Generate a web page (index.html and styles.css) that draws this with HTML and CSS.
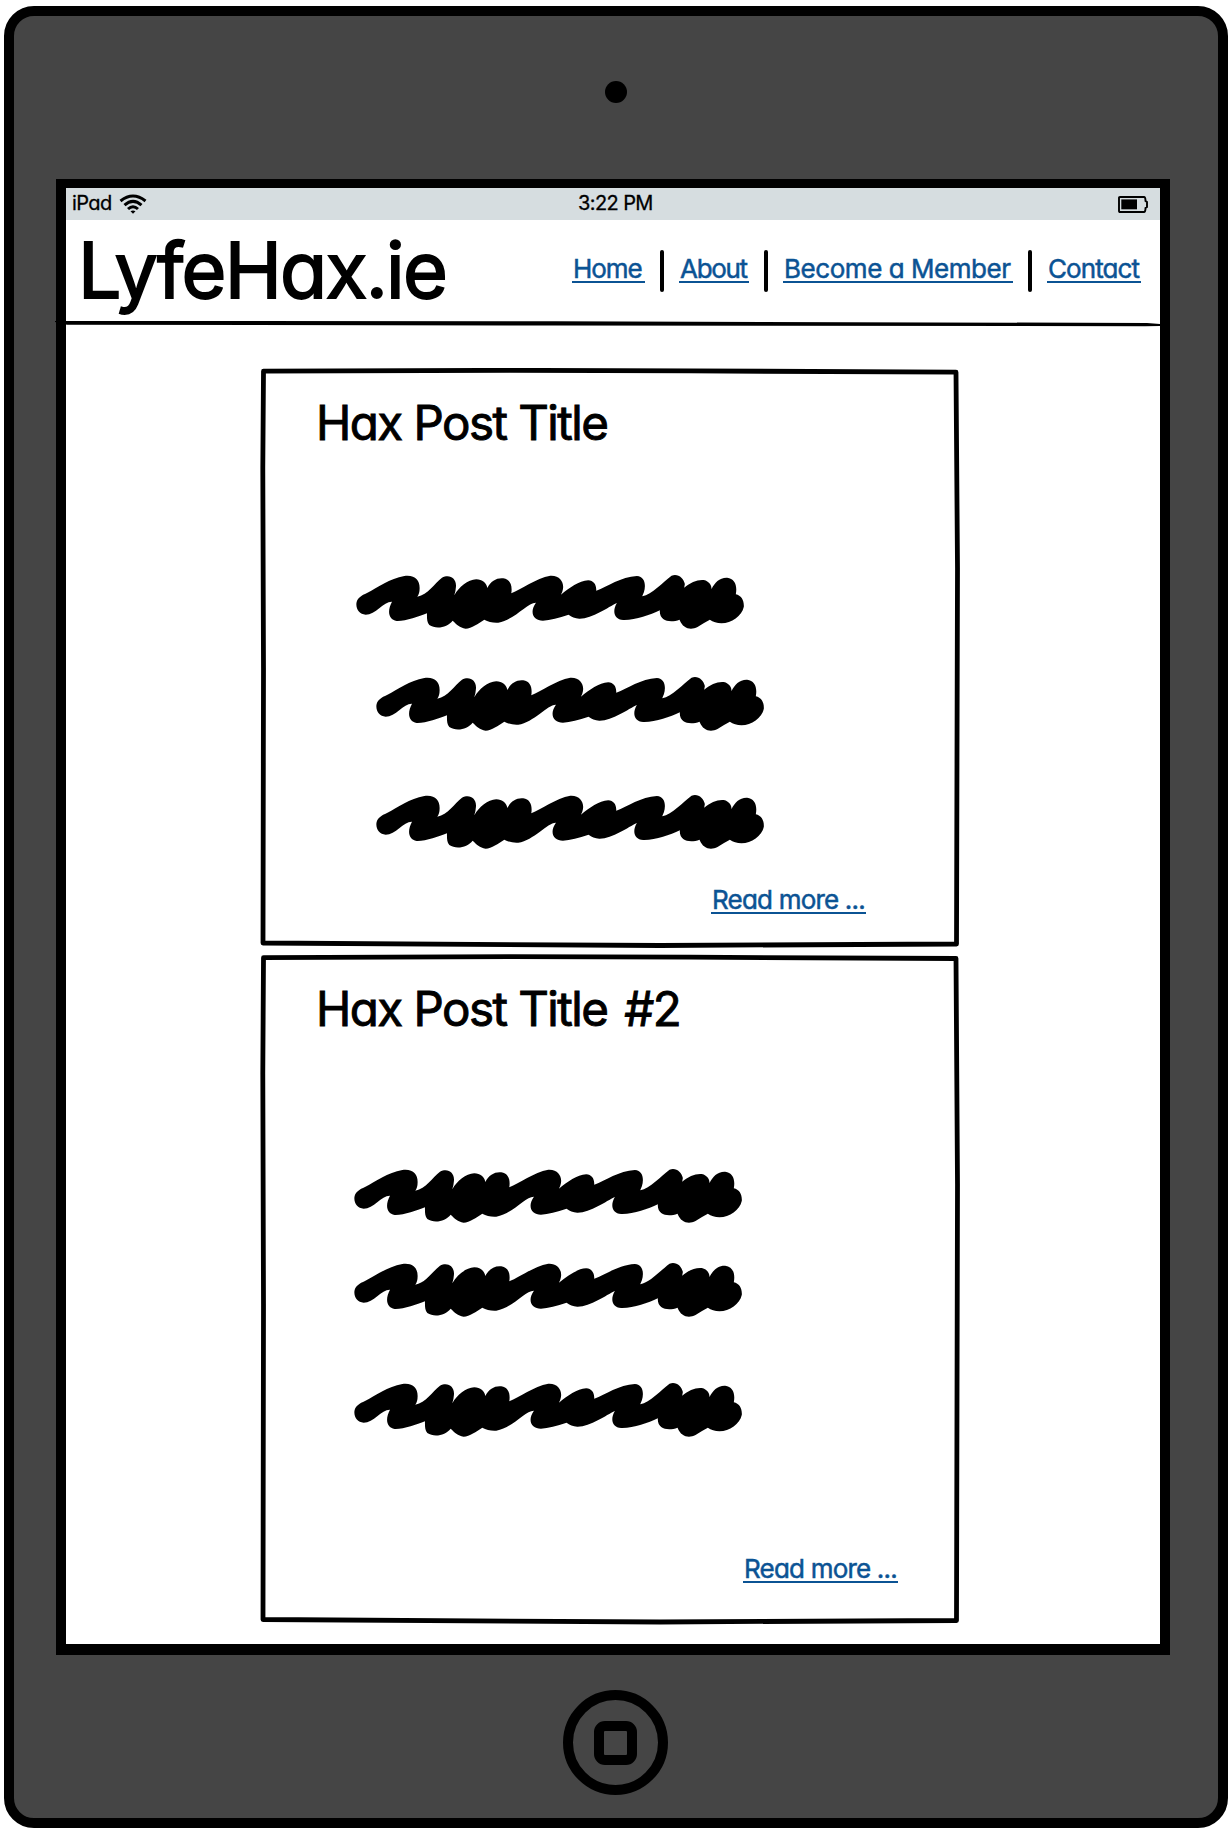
FILE: index.html
```html
<!DOCTYPE html>
<html lang="en">
<head>
<meta charset="utf-8">
<title>LyfeHax.ie</title>
<link rel="stylesheet" href="styles.css">
</head>
<body>
<svg class="defs" aria-hidden="true">
  <symbol id="scribble" viewBox="35 43 1166 162">
    <path d="M36 130C37 112 52 104 68 97C98 82 137 53 180 46C212 42 226 58 226 82Q226 99 219 108C251 102 269 70 293 51C316 39 337 53 335 78Q334 93 330 104C345 78 370 58 396 56C414 56 427 67 429 82C440 61 457 51 477 53C498 56 505 75 501 98C531 86 575 53 618 45C648 43 660 66 656 86Q655 94 650 102C676 82 704 60 732 59C748 60 757 72 756 90C790 78 830 48 878 46C902 48 906 72 899 95L894 107C924 101 955 65 982 45C1002 38 1018 52 1022 70L1020 81C1039 65 1060 56 1079 58C1095 62 1102 73 1102 85C1112 66 1126 50 1149 51C1171 54 1180 72 1175 101C1191 105 1200 118 1199 138C1193 166 1162 187 1132 188Q1111 187 1097 177Q1078 187 1060 199C1040 209 1017 205 1006 177C979 188 944 182 947 149C917 163 874 179 837 178C808 177 804 149 818 127C792 139 743 175 705 174Q686 173 673 162Q629 177 596 180C568 180 554 156 575 126C550 125 509 179 462 186C447 187 432 184 420 177C402 189 382 203 364 204C346 201 337 191 325 180C310 200 276 207 255 193C247 185 248 170 248 158C223 168 184 182 157 181C132 176 128 151 143 123C118 122 94 162 64 162C47 161 36 149 36 130Z"/>
  </symbol>
</svg>
<div class="tablet">
  <div class="camera"></div>
  <main class="screen">
    <div class="status">
      <span class="carrier">iPad</span>
      <svg class="wifi" viewBox="0 0 28 20"><g fill="none" stroke="#000" stroke-width="3"><path d="M1.5 7Q14 -3 26.500 7"/><path d="M5.500 11.200Q14 3.600 22.500 11.200"/><path d="M9 15Q14 10.500 19 15"/></g><path d="M11.500 17.300Q14 15.500 16.500 17.300L14 19.800Z"/></svg>
      <span class="time">3:22 PM</span>
      <svg class="battery" viewBox="0 0 30 17"><path d="M2 1H26Q27.500 1 27.500 5L29 6V11L27.500 12Q27.500 16 26 16H2Q1 16 1 15V2Q1 1 2 1Z" fill="none" stroke="#000" stroke-width="1.900"/><path d="M3.300 3.400H19V13.300H3.300Z"/></svg>
    </div>
    <header class="header">
      <div class="brand">LyfeHax.ie</div>
      <nav class="nav">
        <a class="link home" href="#">Home</a><i class="sep"></i>
        <a class="link about" href="#">About</a><i class="sep"></i>
        <a class="link member" href="#">Become a Member</a><i class="sep"></i>
        <a class="link contact" href="#">Contact</a>
      </nav>
      <svg class="rule" viewBox="0 0 1106 7"><path d="M0 1L12 1L500 1.300L1092 3L1105 4V6L1090 6.200L500 5.500L12 4.700L0 2Z"/></svg>
    </header>
    <article class="card first">
      <svg class="frame" viewBox="0 0 700 580"><path d="M3.500 3.200L250 2.300L430 2.900L696 4.200L697.500 200L696.500 576L400 577.500L3 575L3.500 300L2.800 100Z"/></svg>
      <h2 class="title">Hax Post Title</h2>
      <svg class="scribble s1"><use href="#scribble"/></svg>
      <svg class="scribble s2"><use href="#scribble"/></svg>
      <svg class="scribble s3"><use href="#scribble"/></svg>
      <a class="link more" href="#">Read more ...</a>
    </article>
    <article class="card second">
      <svg class="frame" viewBox="0 0 700 671"><path d="M3.500 3.700L250 2.700L430 3.200L696 4.500L697.500 230L696.500 666.500L400 668L3 665.500L3.500 350L2.800 120Z"/></svg>
      <h2 class="title">Hax Post Title <span class="number">#2</span></h2>
      <svg class="scribble s4"><use href="#scribble"/></svg>
      <svg class="scribble s5"><use href="#scribble"/></svg>
      <svg class="scribble s6"><use href="#scribble"/></svg>
      <a class="link more" href="#">Read more ...</a>
    </article>
  </main>
  <div class="button"><div class="button-mark"></div></div>
</div>
</body>
</html>
```
FILE: styles.css
```css
* { box-sizing: border-box; }
body {
  margin: 0;
  padding: 6px 4px 4px;
  background: #fff;
  color: #000;
  font-family: Inter, "Liberation Sans", sans-serif;
  font-feature-settings: "cv11" 1;
}
.defs { position: absolute; width: 0; height: 0; }
.tablet {
  display: flex;
  flex-direction: column;
  align-items: center;
  width: 1224px;
  height: 1822px;
  border: 10px solid #000;
  border-radius: 30px;
  background: #454545;
}
.camera { width: 22px; height: 22px; margin-top: 65px; border-radius: 50%; background: #000; }
.screen {
  width: 1114px;
  height: 1476px;
  margin: 76px 6px 0 0;
  border: solid #000;
  border-width: 9px 10px 11px;
  background: #fff;
}
.status {
  display: grid;
  grid-template-columns: 47px 28px 1fr 30px;
  align-items: center;
  height: 32px;
  padding: 0 12px 0 6px;
  background: #d6dde0;
  font-size: 20px;
  letter-spacing: -.6px;
  white-space: nowrap;
  -webkit-text-stroke: .3px #000;
}
.carrier, .time { line-height: 30px; height: 32px; }
.wifi { width: 28px; height: 20px; }
.time { margin-left: 431px; }
.battery { width: 30px; height: 17px; }
.header {
  position: relative;
  display: flex;
  justify-content: space-between;
  height: 106px;
  padding: 0 19px 0 12px;
}
.brand { width: 380px; font-size: 77px; line-height: 100px; -webkit-text-stroke: 1.800px #000; letter-spacing: -1.800px; white-space: nowrap; }
.nav { display: flex; height: 42px; margin-top: 30px; gap: 15px; align-items: flex-start; }
.sep { width: 4px; height: 42px; border-radius: 2px; background: #000; }
.link {
  display: block;
  height: 28px;
  border-bottom: 2px solid #0b5394;
  padding-left: 1px;
  color: #0b5394;
  font-size: 26px;
  line-height: 27px;
  white-space: nowrap;
  text-decoration: none;
  -webkit-text-stroke: .5px #0b5394;
}
.nav .link { margin-top: 5px; }
.home { width: 73px; letter-spacing: -1.100px; }
.about { width: 70px; letter-spacing: -1.300px; }
.member { width: 230px; letter-spacing: -.450px; }
.contact { width: 94px; letter-spacing: -.900px; }
.rule { position: absolute; left: -11px; bottom: -1px; width: 1106px; height: 7px; }
.card { position: relative; width: 700px; margin-left: 194px; padding-left: 56px; }
.first { height: 586px; margin-top: 42px; }
.second { height: 671px; }
.frame { position: absolute; left: 0; top: 0; width: 700px; fill: none; stroke: #000; stroke-width: 4.800px; stroke-linejoin: round; }
.title {
  margin: 0;
  padding-top: 26px;
  font-size: 47.500px;
  font-weight: 400;
  line-height: 58px;
  letter-spacing: -1.550px;
  white-space: nowrap;
  -webkit-text-stroke: .900px #000;
}
.number { margin-left: 5px; }
.scribble { display: block; width: 388.500px; height: 54px; }
.s1 { margin: 123px 0 0 40px; }
.s2 { margin: 48px 0 0 60px; }
.s3 { margin: 64px 0 0 60px; }
.s4 { margin: 131px 0 0 38px; }
.s5 { margin: 40px 0 0 38px; }
.s6 { margin: 66px 0 0 38px; }
.more { width: 155px; letter-spacing: -.800px; }
.first .more { margin: 36.500px 0 0 395px; }
.second .more { margin: 118px 0 0 427px; }
.button {
  display: flex;
  align-items: center;
  justify-content: center;
  width: 105px;
  height: 105px;
  margin: 35px 1px 0 0;
  border: 10px solid #000;
  border-radius: 50%;
}
.button-mark { width: 43px; height: 44px; border: 10px solid #000; border-radius: 11px; }
```
